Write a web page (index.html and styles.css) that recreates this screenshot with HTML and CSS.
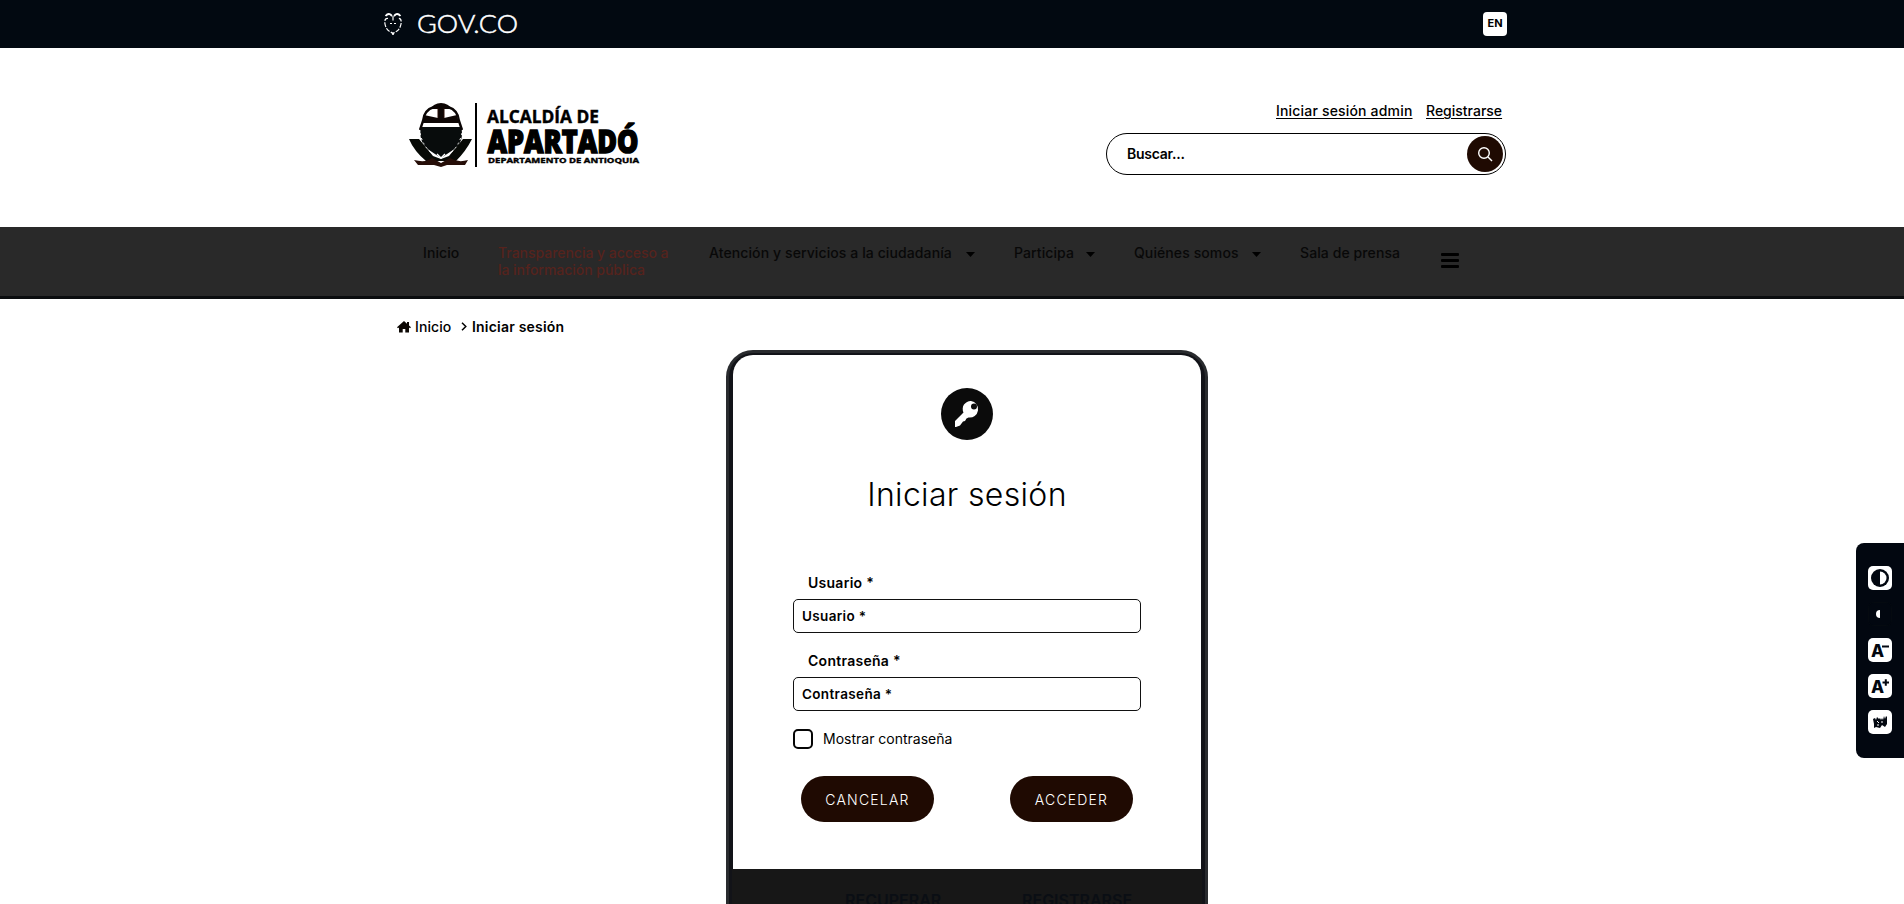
FILE: index.html
```html
<!DOCTYPE html>
<html lang="es">
<head>
<meta charset="utf-8">
<title>Iniciar sesión - Alcaldía de Apartadó</title>
<link rel="stylesheet" href="styles.css">
</head>
<body>
<div class="govbar">
  <a class="gov">
    <svg class="gov-crest" viewBox="0 0 18 24" width="18" height="24" fill="none" stroke="#fff" stroke-width="1.2">
      <path d="M1.5 4 Q4 1 6.5 2.5 L8 4M16.5 4 Q14 1 11.5 2.5 L10 4" stroke-width="1.8"/><path d="M9 4V8.5"/><path d="M4 6.5 Q0 6 1 12 Q2 17 5 19 L9 21.5 L13 19 Q16 17 17 12 Q18 6 14 6.5" stroke-dasharray="4.5 1.4"/><path d="M6 11.5H8M10 11.5H12" stroke-width="1"/><path d="M9 20.5V23" stroke-width="1.6"/>
    </svg>
    <svg width="106" height="34" viewBox="0 -4 106 34"><text class="gov-name" x="1" y="22" textLength="101" lengthAdjust="spacingAndGlyphs">GOV.CO</text></svg>
  </a>
  <span class="lang">EN</span>
</div>
<header class="header">
  <svg class="logo" width="240" height="70" viewBox="408 100 240 70">
    <g fill="#0d0604">
      <path d="M434 105 Q441 101 448 105 L452 109 H430Z"/>
      <path d="M438 106 H444 V118 L457 115 L459 123 H423 L424 115 L438 118Z"/>
      <path d="M421 127 H461 Q465 142 453 150 L441 158 L429 150 Q418 142 421 127Z" fill="#080c0c"/>
      <path d="M409 139 H419 L433 156 L441 159 L449 156 L463 139 H472 Q466 151 456 161 H426 Q414 151 409 139Z" fill="#070a06"/>
      <path d="M414 160 Q426 163 432 158 L441 163 L450 158 Q458 163 468 160 L465 165 H447 L441 167 L434 165 H418Z" fill="#260e08"/>
    </g>
    <path d="M438 108V118M444 108V118" stroke="#290d05" stroke-width="1"/>
    <path d="M434 107 Q424 110 423 121 L420 130 M448 107 Q458 110 459 121 L462 130" stroke="#0a0504" stroke-width="2.4" fill="none"/>
    <path d="M425 125.5H457" stroke="#fff" stroke-width="1.8"/>
    <path d="M420 133 Q423 147 433 154 M462 133 Q459 147 449 154" stroke="#fff" stroke-width="1" stroke-dasharray="2 3" fill="none"/>
    <path d="M437 154 L441 158 L445 154" stroke="#fff" stroke-width="1.4" fill="none"/>
    <path d="M476 103V167" stroke="#000" stroke-width="2"/>
    <text class="logo-top" x="487" y="123" textLength="112" lengthAdjust="spacingAndGlyphs">ALCALDÍA DE</text>
    <text class="logo-main" x="487.500" y="153" textLength="151" lengthAdjust="spacingAndGlyphs">APARTADÓ</text>
    <text class="logo-sub" x="488" y="162.500" textLength="151" lengthAdjust="spacingAndGlyphs">DEPARTAMENTO DE ANTIOQUIA</text>
  </svg>
  <div class="tools">
    <div class="links"><a class="link-admin">Iniciar sesión admin</a><a class="link-reg">Registrarse</a></div>
    <div class="search"><span class="search-text">Buscar...</span>
      <button class="search-btn" aria-label="Buscar"><svg width="16" height="16" viewBox="0 0 16 16" fill="none" stroke="#fff" stroke-width="1.4"><circle cx="7" cy="7" r="5.3"/><path d="M11 11L15 15"/></svg></button>
    </div>
  </div>
</header>
<nav class="nav">
  <a class="item inicio">Inicio</a>
  <a class="item transp">Transparencia y acceso a<br>la información pública</a>
  <a class="item atencion">Atención y servicios a la ciudadanía</a><i class="caret"></i>
  <a class="item participa">Participa</a><i class="caret"></i>
  <a class="item quienes">Quiénes somos</a><i class="caret"></i>
  <a class="item sala">Sala de prensa</a>
  <span class="burger"><i></i><i></i><i></i></span>
</nav>
<main class="main">
  <div class="crumbs">
    <svg width="14" height="12" viewBox="0 0 14 12" fill="#0c0804"><path d="M7 0L10 2.7V1H12V4.5L14 6.3L13 7.2L12 6.4V11.5H8.3V8H5.7V11.5H2V6.4L1 7.2L0 6.3Z"/></svg>
    <span class="crumb-home">Inicio</span>
    <svg class="chev" width="6" height="9" viewBox="0 0 6 9" fill="none" stroke="#000" stroke-width="1.5"><path d="M1 .7L4.8 4.5L1 8.3"/></svg>
    <span class="crumb-now">Iniciar sesión</span>
  </div>
  <section class="card">
    <div class="card-body">
      <div class="key"><svg width="26" height="28" viewBox="0 0 26 28"><path fill="#fff" fill-rule="evenodd" d="M17 1A8 8 0 1 1 14.5 17.5L12.5 18.5L11 21L9 21.5L6 25.5L2 27H1V21L9.5 12.5A8 8 0 0 1 17 1ZM20 3.6A3 3 0 1 0 20 9.6A3 3 0 1 0 20 3.6Z"/></svg></div>
      <h1 class="title">Iniciar sesión</h1>
      <label class="label l-user">Usuario *</label>
      <div class="input">Usuario *</div>
      <label class="label">Contraseña *</label>
      <div class="input">Contraseña *</div>
      <div class="check"><i class="box"></i><span class="check-text">Mostrar contraseña</span></div>
      <div class="buttons"><button class="btn cancel">CANCELAR</button><button class="btn enter">ACCEDER</button></div>
    </div>
    <div class="card-foot"><span class="recover">RECUPERAR</span><span class="register">REGISTRARSE</span></div>
  </section>
</main>
<aside class="access">
  <svg width="24" height="24" viewBox="0 0 24 24"><rect width="24" height="24" rx="5" fill="#fff"/><circle cx="12" cy="12" r="9" fill="#020710"/><path d="M12 5.500A6.500 6.500 0 0 1 12 18.500Z" fill="#fff"/></svg>
  <svg width="24" height="24" viewBox="0 0 24 24"><rect x=".5" y=".5" width="23" height="23" rx="5" fill="none" stroke="#050a10"/><path d="M12 8A4 4 0 0 0 12 16Z" fill="#fff"/></svg>
  <svg width="24" height="24" viewBox="0 0 24 24"><rect width="24" height="24" rx="5" fill="#fff"/><text class="letter" x="3" y="19">A</text><path d="M14 8.500H21" stroke="#020710" stroke-width="2"/></svg>
  <svg width="24" height="24" viewBox="0 0 24 24"><rect width="24" height="24" rx="5" fill="#fff"/><text class="letter" x="3" y="19">A</text><path d="M14.500 8.500H21M17.800 5.300V11.700" stroke="#020710" stroke-width="2"/></svg>
  <svg width="24" height="24" viewBox="0 0 24 24"><rect width="24" height="24" rx="5" fill="#fff"/><path d="M5 9L7 8L8 10L9 7L11 9L12 8L13 10L14 8L15 10L16 6L17 9L18 6L19 7V14L17 17L14 15L12 18L8 17L6 18L6 14Z" fill="#020710"/><path d="M9 11L11 13M14 11L14 13M9 15L11 15" stroke="#fff" stroke-width="1"/></svg>
</aside>
</body>
</html>
```
FILE: styles.css
```css
* { box-sizing: border-box; }
body { margin: 0; height: 904px; overflow: hidden; background: #fff; color: #000; font: 14px/17px Inter, "Open Sans", sans-serif; }
svg { display: block; flex: none; }
button { border: 0; padding: 0; font: inherit; }
.govbar { height: 48px; background: #020911; display: flex; justify-content: space-between; padding: 0 397px 0 384px; align-items: center; }
.gov { display: flex; align-items: center; gap: 14px; }
.gov-name { font: 300 25px Lato, sans-serif; fill: #fff; stroke: #fff; stroke-width: .5px; }
.lang { width: 24px; height: 24px; border-radius: 4px; background: #fff; font-size: 11px; line-height: 22px; font-weight: 700; text-align: center; }
.header { height: 179px; display: flex; justify-content: space-between; padding: 52px 398px 0 408px; }
.logo text { font-family: "Open Sans", sans-serif; stroke: #000; }
.logo .logo-top { font-size: 18px; font-weight: 700; stroke-width: .4px; }
.logo .logo-main { font-size: 32.5px; font-weight: 800; stroke-width: 1.5px; }
.logo .logo-sub { font-size: 7.5px; font-weight: 700; stroke-width: .4px; }
.tools { width: 400px; }
.links { display: flex; justify-content: flex-end; gap: 13px; padding: 2px 4px 0 0; height: 33px; }
.links a { text-decoration: underline; text-underline-offset: 2px; white-space: nowrap; font-weight: 500; }
.link-admin { width: 137px; letter-spacing: .18px; }
.link-reg { width: 76px; }
.search { height: 42px; border: 1px solid #000; border-radius: 21px; display: flex; align-items: center; justify-content: space-between; padding: 0 2px 0 20px; font-weight: 600; }
.search-text { padding-bottom: 1px; letter-spacing: -.25px; }
.search-btn { width: 36px; height: 36px; border-radius: 50%; background: #1f0a02; display: grid; place-items: center; }
.nav { height: 72px; background: #292929; border-bottom: 3px solid #0b0d0f; display: flex; padding: 17px 0 0 423px; color: #080808; font-weight: 500; letter-spacing: .1px; }
.item { white-space: nowrap; flex: none; }
.inicio { width: 75px; }
.transp { width: 211px; color: #56231d; letter-spacing: -.03px; }
.atencion { width: 258px; }
.participa { width: 73px; }
.quienes { width: 119px; }
.sala { width: 141px; }
.caret { width: 9px; height: 5px; background: #000; clip-path: polygon(0 0, 100% 0, 50% 100%); margin: 8px 39px 0 -1px; flex: none; }
.burger { width: 18px; height: 15px; margin-top: 9px; display: flex; flex-direction: column; justify-content: space-between; }
.burger i { height: 3px; background: #000; border-radius: 1px; }
.main { padding: 19px 0 0; }
.crumbs { display: flex; align-items: center; height: 17px; padding-left: 397px; }
.crumb-home { margin-left: 4px; width: 46px; font-weight: 500; letter-spacing: .1px; }
.chev { margin-right: 5px; }
.crumb-now { font-weight: 600; letter-spacing: .2px; }
.card { width: 482px; height: 554px; margin: 15px 0 0 726px; border: solid #292b2e; border-width: 3px 3px 0; border-radius: 27px 27px 0 0; background: #121318; overflow: hidden; }
.card-body { height: 514px; margin: 2px 4px 0; border-radius: 20px 20px 0 0; background: #fff; padding: 33px 60px 0; }
.key { width: 52px; height: 52px; margin: 0 auto; border-radius: 50%; background: #0b0b0b; display: grid; place-items: center; }
.title { margin: 35px 0 59px; font-size: 32px; line-height: 40px; font-weight: 300; text-align: center; white-space: nowrap; letter-spacing: .33px; }
.label { display: block; height: 25px; padding-left: 15px; font-weight: 600; letter-spacing: .27px; }
.input { height: 34px; border: 1px solid #111; border-radius: 5px; padding: 8px 8px; font-weight: 600; margin-bottom: 19px; font-size: 13.5px; line-height: 17px; letter-spacing: .35px; }
.check { display: flex; gap: 10px; align-items: center; height: 20px; margin: -1px 0 27px; }
.check-text { padding-bottom: 2px; }
.box { width: 20px; height: 20px; border: 2px solid #050505; border-radius: 5px; }
.buttons { display: flex; justify-content: space-between; padding: 0 8px; }
.btn { height: 46px; border-radius: 23px; background: #1f0a02; color: #fff; font-weight: 300; letter-spacing: 1.2px; white-space: nowrap; }
.cancel { width: 133px; }
.enter { width: 123px; }
.card-foot { background: #171717; height: 35px; overflow: hidden; margin: 0 3px; display: flex; padding: 21px 0 0 113px; font-weight: 600; font-size: 16px; line-height: 20px; color: #0a0e14; }
.recover { width: 177px; }
.access { position: fixed; right: 0; top: 543px; width: 48px; height: 215px; border-radius: 8px 0 0 8px; background: #020710; display: flex; flex-direction: column; gap: 12px; padding: 23px 12px; }
.letter { font: 800 17px Inter, sans-serif; fill: #020710; }
```
